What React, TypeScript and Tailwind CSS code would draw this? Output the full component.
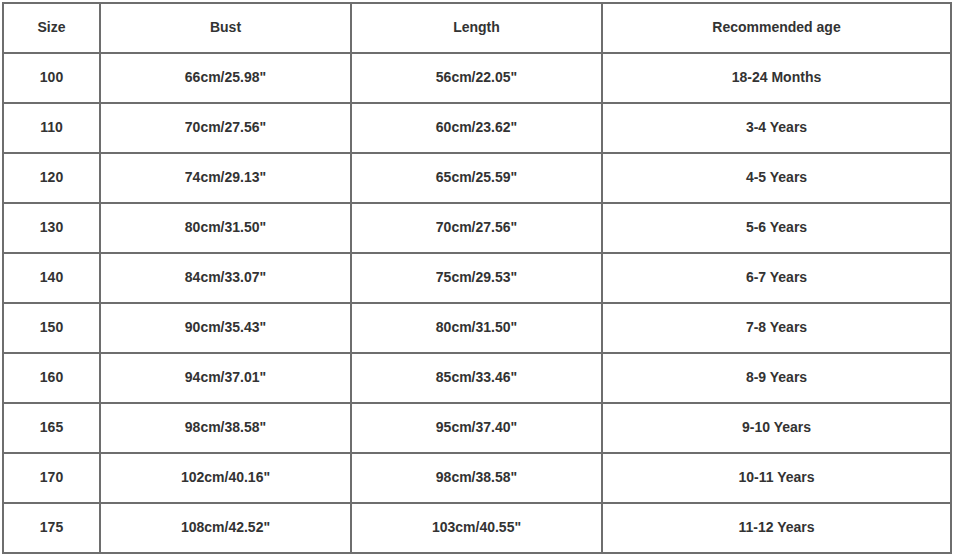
import React from 'react'

const rows = [
  ['100', '66cm/25.98"', '56cm/22.05"', '18-24 Months'],
  ['110', '70cm/27.56"', '60cm/23.62"', '3-4 Years'],
  ['120', '74cm/29.13"', '65cm/25.59"', '4-5 Years'],
  ['130', '80cm/31.50"', '70cm/27.56"', '5-6 Years'],
  ['140', '84cm/33.07"', '75cm/29.53"', '6-7 Years'],
  ['150', '90cm/35.43"', '80cm/31.50"', '7-8 Years'],
  ['160', '94cm/37.01"', '85cm/33.46"', '8-9 Years'],
  ['165', '98cm/38.58"', '95cm/37.40"', '9-10 Years'],
  ['170', '102cm/40.16"', '98cm/38.58"', '10-11 Years'],
  ['175', '108cm/42.52"', '103cm/40.55"', '11-12 Years'],
]

const header = ['Size', 'Bust', 'Length', 'Recommended age']

export default function App() {
  return (
    <div className="w-[954px] h-[556px] bg-white pt-[2px] pl-[2px]" style={{ fontFamily: '"Liberation Sans", Arial, sans-serif' }}>
      <div className="grid grid-cols-[97px_251px_251px_349px] border-l-2 border-t-2 border-[#6e6e6e] w-fit">
        {[header, ...rows].map((row, i) =>
          row.map((cell, j) => (
            <div
              key={`${i}-${j}`}
              className="h-[50px] pb-[2px] flex items-center justify-center border-r-2 border-b-2 border-[#6e6e6e] text-[14px] font-bold text-[#333333]"
            >
              {cell}
            </div>
          ))
        )}
      </div>
    </div>
  )
}
